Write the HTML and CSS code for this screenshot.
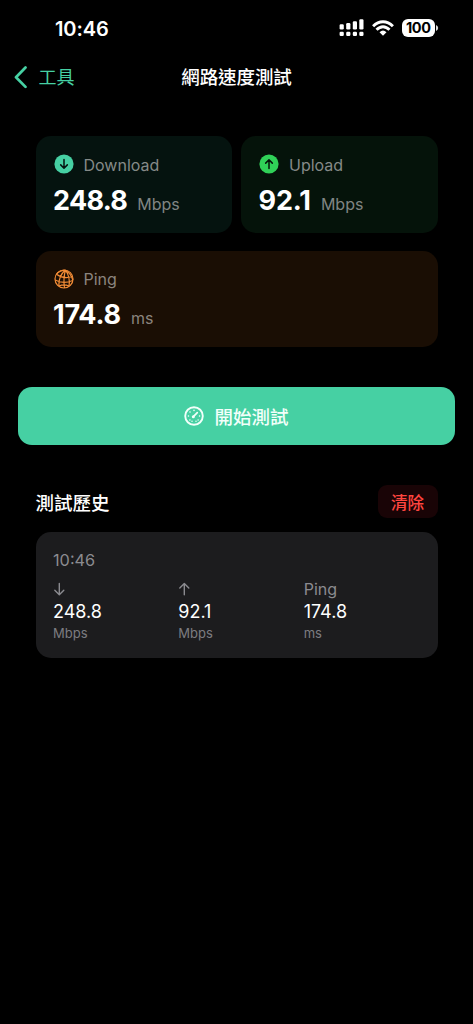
FILE: index.html
```html
<!DOCTYPE html>
<html lang="zh-Hant">
<head>
<meta charset="utf-8">
<title>網路速度測試</title>
<link rel="stylesheet" href="styles.css">
</head>
<body>
<header class="status">
  <span class="clock">10:46</span>
  <div class="indicators">
    <svg class="signal" width="26" height="18" viewBox="0 0 26 18" fill="#fff">
      <rect x="0.6" y="5.3" width="4.2" height="5.2" rx="1.2"/><rect x="7.2" y="4" width="4.2" height="6.5" rx="1.2"/><rect x="13.8" y="2.3" width="4.2" height="8.2" rx="1.2"/><rect x="20.3" y="0.3" width="4.2" height="10.2" rx="1.2"/>
      <rect x="0.6" y="12.7" width="4.2" height="4.2" rx="1.2"/><rect x="7.2" y="12.7" width="4.2" height="4.2" rx="1.2"/><rect x="13.8" y="12.7" width="4.2" height="4.2" rx="1.2"/><rect x="20.3" y="12.7" width="4.2" height="4.2" rx="1.2"/>
    </svg>
    <svg class="wifi" width="22" height="16" viewBox="0 0 22 16" fill="none" stroke="#fff" stroke-width="2.9">
      <path d="M1.1 6.2Q5.5 1.7 11 1.7T20.9 6.2"/><path d="M4.5 9.8Q7.6 6.7 11 6.7T17.5 9.8"/><path d="M7.5 12.2Q11 8.9 14.5 12.2L11 15.7Z" fill="#fff" stroke="none"/>
    </svg>
    <div class="battery">100</div>
    <svg class="nub" width="3" height="6" viewBox="0 0 3 6"><path d="M0 0Q2.2 1 2.2 3T0 6Z" fill="#ddd"/></svg>
  </div>
</header>
<nav class="nav">
  <a class="back"><svg width="14" height="24" viewBox="0 0 14 24" fill="none" stroke="#46d0a3" stroke-width="2.7" stroke-linecap="round" stroke-linejoin="round"><path d="M12.500 1.500 3 11.200 12.500 20.900"/></svg><span>工具</span></a>
  <h1>網路速度測試</h1>
</nav>
<main>
  <section class="cards">
    <article class="card download">
      <div class="label"><svg width="20" height="20" viewBox="0 0 20 20"><circle cx="10" cy="10" r="9.6" fill="#46d0a3"/><path d="M10 5.4V14M6.7 10.9 10 14.2 13.3 10.9" fill="none" stroke="#05130f" stroke-width="1.5" stroke-linecap="round" stroke-linejoin="round"/></svg><span>Download</span></div>
      <div class="reading"><strong>248.8</strong><span>Mbps</span></div>
    </article>
    <article class="card upload">
      <div class="label"><svg width="20" height="20" viewBox="0 0 20 20"><circle cx="10" cy="10" r="9.6" fill="#30d158"/><path d="M10 14.6V6M6.7 9.1 10 5.8 13.3 9.1" fill="none" stroke="#05130a" stroke-width="1.5" stroke-linecap="round" stroke-linejoin="round"/></svg><span>Upload</span></div>
      <div class="reading"><strong>92.1</strong><span>Mbps</span></div>
    </article>
    <article class="card ping">
      <div class="label"><svg width="20" height="20" viewBox="0 0 20 20" fill="none" stroke="#f28c36" stroke-width="1.2"><circle cx="10" cy="10" r="9"/><path d="M11.500 1.200Q4.500 6 4.800 17.300M11.500 1.200Q9 9 10.500 19M11.500 1.200Q16.500 8 15 17.300M2.500 5.200Q9.500 10.500 18.600 7.500M1.200 11Q9 15.500 18.800 11.500M11.500 1.200Q17 4.500 18.800 11M11.500 1.200Q4.500 2 2.500 5.200M4.800 17.300Q10 14.500 15 17.300"/></svg><span>Ping</span></div>
      <div class="reading"><strong>174.8</strong><span>ms</span></div>
    </article>
  </section>
  <button class="start"><svg width="20" height="20" viewBox="0 0 20 20" fill="none" stroke="#f2fffa" stroke-linecap="round"><circle cx="10" cy="10" r="8.8" stroke-width="1.9"/><path d="M9.400 10.600 13.300 6.700" stroke-width="1.700"/><circle cx="9.300" cy="10.700" r="1.500" fill="#f2fffa" stroke="none"/><path d="M10 4.300v.1M6 6v.1M4.400 10h.1M5.900 14v.1M14.100 14v.1M15.500 10h.1M8 15.200v.1M12 15.200v.1" stroke-width="1.500"/></svg><span>開始測試</span></button>
  <section class="history">
    <div class="history-head"><h2>測試歷史</h2><button class="clear">清除</button></div>
    <article class="entry">
      <time>10:46</time>
      <div class="metrics">
        <div><div class="kind"><svg width="13" height="14" viewBox="0 0 13 14"><path d="M6.300 1.500V12.500M1.800 8.200 6.300 12.700 10.800 8.200"/></svg></div><div class="value">248.8</div><div class="unit">Mbps</div></div>
        <div><div class="kind"><svg width="13" height="14" viewBox="0 0 13 14"><path d="M6.300 12.800V1.800M1.800 6.100 6.300 1.600 10.800 6.100"/></svg></div><div class="value">92.1</div><div class="unit">Mbps</div></div>
        <div><div class="kind">Ping</div><div class="value">174.8</div><div class="unit">ms</div></div>
      </div>
    </article>
  </section>
</main>
</body>
</html>
```
FILE: styles.css
```css
* { box-sizing: border-box; }
body { margin: 0; min-height: 1024px; background: #000; color: #fff; font-family: Inter, "Noto Sans CJK TC", sans-serif; }
h1, h2 { margin: 0; font-weight: 500; font-size: 18.5px; }
button { border: 0; font-family: inherit; }
svg { display: block; flex: none; }
.status { height: 55px; padding: 1px 34.500px 0 55px; display: flex; align-items: center; justify-content: space-between; }
.clock { font-size: 20px; font-weight: 600; letter-spacing: -0.1px; padding-top: 1px; }
.indicators { display: flex; align-items: center; }
.wifi { margin-left: 7.500px; }
.battery { margin-left: 8px; width: 32.500px; height: 18px; border-radius: 6px; background: #fff; color: #000; font-size: 14.5px; line-height: 18px; font-weight: 700; text-align: center; letter-spacing: -0.4px; }
.nub { margin-left: 1px; }
.nav { height: 43px; display: grid; grid-template-columns: 1fr auto 1fr; align-items: center; }
.nav h1 { line-height: 43px; padding-top: 1px; letter-spacing: -0.1px; }
.back { padding: 1px 0 0 12.500px; display: flex; align-items: center; gap: 12px; color: #46d0a3; font-size: 18px; line-height: 43px; }
main { padding: 38.300px 18px 0; }
.cards { padding: 0 17.500px; display: grid; grid-template-columns: 1fr 1fr; gap: 18px 9px; }
.card { height: 96.500px; padding: 18px 17.500px 0; border-radius: 15px; }
.download { background: #05130f; }
.upload { background: #05130a; }
.ping { grid-column: 1 / 3; background: #1a0e04; }
.label { display: flex; align-items: center; gap: 10.500px; height: 20px; color: #858a88; font-size: 16px; line-height: 20px; }
.label svg { margin-left: 0.5px; margin-right: -0.5px; }
.label span { padding-top: 1px; }
.reading { display: flex; align-items: baseline; gap: 10px; margin-top: 9.500px; line-height: 34px; color: #808583; font-size: 16px; }
.reading strong { color: #fff; font-size: 27px; font-weight: 700; }
.download strong { letter-spacing: -0.7px; }
.upload strong { letter-spacing: -0.1px; }
.ping strong { letter-spacing: -0.2px; }
.ping .label, .ping .reading { color: #8b847e; }
.start { margin-top: 40px; width: 100%; height: 58px; padding: 0; border-radius: 14px; background: #46d0a3; color: #f2fffa; display: flex; align-items: center; justify-content: center; gap: 10px; font-size: 18.500px; font-weight: 500; }
.history { padding: 40px 17.500px 0; }
.history-head { height: 33px; display: flex; align-items: center; justify-content: space-between; }
.clear { width: 60px; height: 33px; padding: 0; border-radius: 9px; background: #190406; color: #ff453f; font-size: 16.500px; font-weight: 500; }
.entry { height: 126.500px; margin-top: 13.500px; padding: 18px 17.500px; border-radius: 15px; background: #1c1c1e; }
.entry time { display: block; height: 20px; line-height: 20px; color: #8b8b90; font-size: 16.300px; }
.metrics { margin-top: 8px; display: grid; grid-template-columns: repeat(3, 1fr); column-gap: 9px; }
.kind { height: 22px; display: flex; align-items: center; color: #8b8b90; font-size: 16px; }
.kind svg { fill: none; stroke: #8b8b90; stroke-width: 1.400; stroke-linecap: round; stroke-linejoin: round; }
.value { height: 24px; line-height: 24px; font-size: 18px; }
.unit { height: 18px; line-height: 18px; color: #7c7c81; font-size: 13px; }
```
